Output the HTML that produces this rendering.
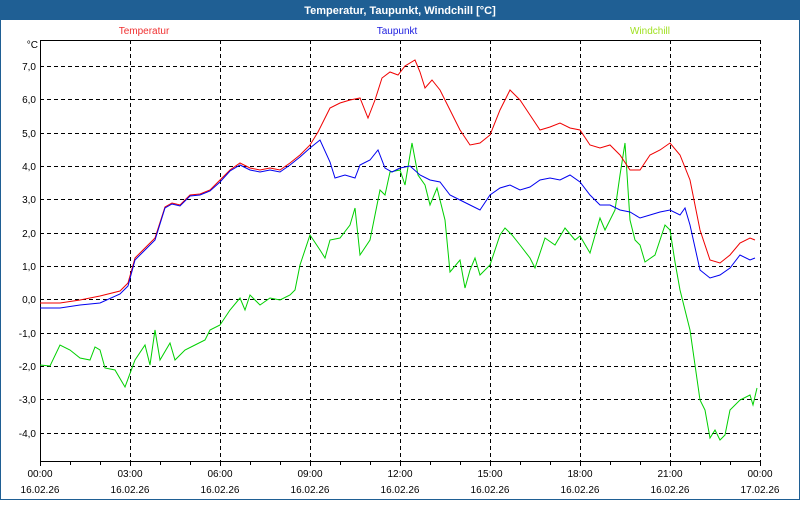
<!DOCTYPE html>
<html><head><style>
body{margin:0;width:800px;height:500px;overflow:hidden;background:#fff;font-family:"Liberation Sans",sans-serif}
</style></head><body>
<svg width="800" height="500" xmlns="http://www.w3.org/2000/svg" font-family="Liberation Sans, sans-serif" font-size="10">
<rect x="0" y="0" width="800" height="500" fill="#fff"/>
<rect x="0.5" y="0.5" width="799" height="499" fill="none" stroke="#1f5f94"/>
<rect x="0" y="0" width="800" height="20" fill="#1f5f94"/>
<text x="400" y="14" text-anchor="middle" fill="#fff" font-weight="bold" font-size="11">Temperatur, Taupunkt, Windchill [°C]</text>
<text x="144" y="34" text-anchor="middle" fill="#f03030" font-size="10">Temperatur</text>
<text x="397" y="34" text-anchor="middle" fill="#2020e0" font-size="10">Taupunkt</text>
<text x="650" y="34" text-anchor="middle" fill="#a0e020" font-size="10">Windchill</text>
<g stroke="#000" stroke-dasharray="4,3" stroke-width="1">
<path d="M40 66.5H760M40 99.5H760M40 133.5H760M40 166.5H760M40 199.5H760M40 233.5H760M40 266.5H760M40 299.5H760M40 333.5H760M40 366.5H760M40 399.5H760M40 433.5H760"/>
<path d="M130.5 40V461M220.5 40V461M310.5 40V461M400.5 40V461M490.5 40V461M580.5 40V461M670.5 40V461M760.5 40V461"/>
</g>
<path d="M40.5 40V461.5H760.5M40 40.5H760" stroke="#000" fill="none"/>
<path d="M40.5 461V466M70.5 461V465M100.5 461V465M130.5 461V466M160.5 461V465M190.5 461V465M220.5 461V466M250.5 461V465M280.5 461V465M310.5 461V466M340.5 461V465M370.5 461V465M400.5 461V466M430.5 461V465M460.5 461V465M490.5 461V466M520.5 461V465M550.5 461V465M580.5 461V466M610.5 461V465M640.5 461V465M670.5 461V466M700.5 461V465M730.5 461V465M760.5 461V466" stroke="#000"/>
<g text-anchor="end" fill="#000">
<text x="38" y="48">°C</text>
<text x="36" y="70">7,0</text><text x="36" y="103">6,0</text><text x="36" y="137">5,0</text><text x="36" y="170">4,0</text><text x="36" y="203">3,0</text><text x="36" y="237">2,0</text><text x="36" y="270">1,0</text><text x="36" y="303">0,0</text><text x="36" y="337">-1,0</text><text x="36" y="370">-2,0</text><text x="36" y="403">-3,0</text><text x="36" y="437">-4,0</text>
</g>
<g text-anchor="middle" fill="#000">
<text x="40" y="477">00:00</text><text x="130" y="477">03:00</text><text x="220" y="477">06:00</text><text x="310" y="477">09:00</text><text x="400" y="477">12:00</text><text x="490" y="477">15:00</text><text x="580" y="477">18:00</text><text x="670" y="477">21:00</text><text x="760" y="477">00:00</text>
<text x="40" y="493">16.02.26</text><text x="130" y="493">16.02.26</text><text x="220" y="493">16.02.26</text><text x="310" y="493">16.02.26</text><text x="400" y="493">16.02.26</text><text x="490" y="493">16.02.26</text><text x="580" y="493">16.02.26</text><text x="670" y="493">16.02.26</text><text x="760" y="493">17.02.26</text>
</g>
<polyline fill="none" stroke="#00d000" points="40,365 50,366 60,345 70,350 80,358 90,360 95,347 100,350 105,368 115,370 125,387 135,360 145,345 150,365 155,330 160,360 170,343 175,360 185,350 195,345 205,340 210,330 220,325 230,310 240,298 245,310 250,295 260,305 270,298 280,300 290,295 295,290 300,265 310,235 320,250 325,258 330,240 340,238 350,225 355,208 360,255 370,240 375,215 380,190 385,195 390,172 400,170 405,185 412,143 418,175 425,185 430,205 437,188 445,220 450,272 460,260 465,288 470,270 475,258 480,275 490,265 500,235 505,228 512,235 520,245 530,258 535,268 545,238 555,245 565,228 575,240 580,236 590,253 600,218 605,230 610,220 615,210 620,175 625,143 630,220 635,240 640,245 645,262 655,255 665,225 670,230 675,262 680,290 690,330 700,400 705,410 710,438 715,430 720,440 725,435 730,410 740,400 750,395 753,405 757,388"/>
<polyline fill="none" stroke="#f00000" points="40,303 60,303 80,300 100,296 120,291 128,283 135,258 145,248 155,238 165,207 172,203 180,205 190,195 200,194 210,190 220,180 230,170 240,163 250,168 260,170 270,168 280,170 290,163 300,155 310,145 318,132 325,118 330,108 340,103 350,100 360,98 368,118 375,100 382,78 390,72 398,75 405,66 415,60 420,72 425,88 432,80 440,90 450,110 460,130 470,145 480,143 490,135 500,110 510,90 520,100 530,115 540,130 550,127 560,123 570,128 580,130 590,145 600,148 610,145 620,155 630,170 640,170 650,155 660,150 670,143 680,155 690,180 700,230 710,260 720,263 730,255 740,243 750,238 755,240"/>
<polyline fill="none" stroke="#0000f0" points="40,308 60,308 80,305 100,303 120,294 128,286 135,260 145,250 155,240 165,208 172,204 180,206 190,196 200,195 210,191 220,182 230,171 240,165 250,170 260,172 270,170 280,172 290,165 300,157 310,148 320,140 330,162 335,178 345,175 355,178 360,165 370,160 378,150 385,168 392,172 400,168 410,166 420,175 430,180 440,182 450,195 460,200 470,205 480,210 490,195 500,188 510,185 520,190 530,187 540,180 550,178 560,180 570,175 580,182 590,195 600,205 610,205 620,210 630,212 640,218 650,215 660,212 670,210 680,215 685,208 690,225 700,270 710,278 720,275 730,268 740,255 750,260 755,258"/>
</svg>
</body></html>
